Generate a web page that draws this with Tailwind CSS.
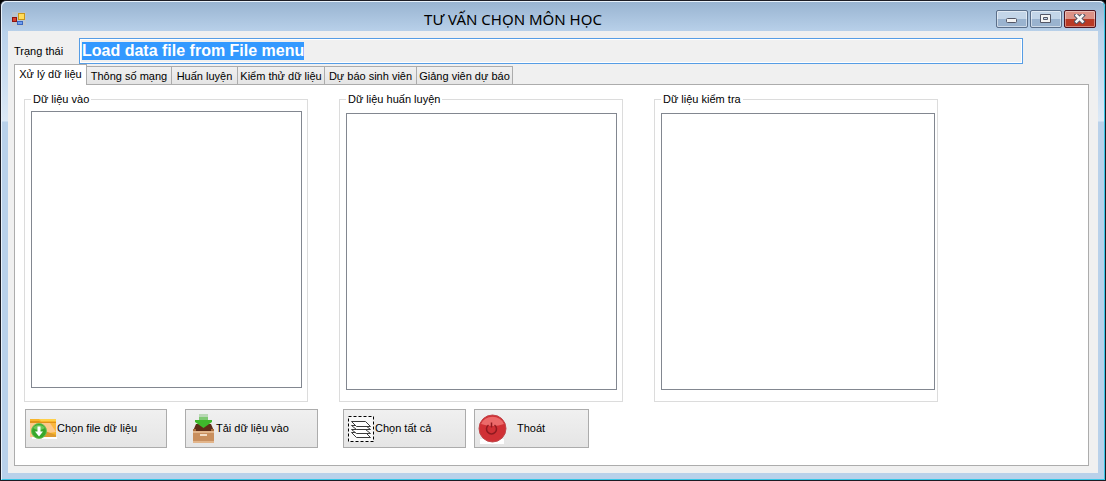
<!DOCTYPE html>
<html lang="vi">
<head>
  <meta charset="UTF-8">
  <meta name="viewport" content="width=device-width, initial-scale=1">
  <title>TƯ VẤN CHỌN MÔN HỌC</title>
  <script src="https://cdn.jsdelivr.net/npm/@tailwindcss/browser@4"></script>
</head>
<body class="bg-black">
  <div class="min-h-screen flex flex-col bg-[#b9d1ea] border border-[#1c1c24] rounded-t-md font-['Liberation_Sans',Arial,sans-serif] text-[11px] leading-[13px] text-black">
    <div class="flex-1 flex flex-col border border-t-[#e9f2fb] border-l-[#e9f2fb] border-r-[#37c6e6] border-b-[#37c6e6] rounded-t-md bg-linear-to-b from-[#99b4d1] to-[#b9d1ea] to-[30px]">

      <!-- Title bar -->
      <header class="h-[29px] flex items-center pl-[10px] pr-2">
        <svg class="w-[14px] h-[14px] mt-[5px]" viewBox="0 0 14 14">
          <rect x="0" y="0" width="14" height="14" fill="#c8c8c4" opacity=".5"/>
          <rect x="0.5" y="5.5" width="4" height="4" fill="#d8402c" stroke="#8d1410"/>
          <rect x="6.5" y="1.5" width="6" height="6" fill="#ffdc5a" stroke="#c8961a"/>
          <rect x="5.5" y="9.500" width="5" height="3" fill="#6f9ff0" stroke="#3a67c0"/>
        </svg>
        <h1 class="flex-1 pl-1 pt-1 text-center font-['Noto_Sans','Open_Sans',sans-serif] text-[15px] leading-5">TƯ VẤN CHỌN MÔN HỌC</h1>
        <div class="flex gap-[2px] pt-1">
          <button type="button" aria-label="Minimize" class="w-8 h-[18px] flex items-center justify-center rounded-xs border border-[#5b6f8a] inset-ring inset-ring-white/50 bg-linear-to-b from-[#c3d5e8] from-50% to-[#9ab3cf] to-50%">
            <svg class="w-[12px] h-[10px]" viewBox="0 0 12 10"><rect x=".5" y="4.500" width="10" height="4" rx="1" fill="#f4f4f4" stroke="#535666"/></svg>
          </button>
          <button type="button" aria-label="Maximize" class="w-8 h-[18px] flex items-center justify-center rounded-xs border border-[#5b6f8a] inset-ring inset-ring-white/50 bg-linear-to-b from-[#c3d5e8] from-50% to-[#9ab3cf] to-50%">
            <svg class="w-[12px] h-[10px]" viewBox="0 0 12 10"><path d="M.5 .5h10v8h-10zM3.500 3.500v2h4v-2z" fill="#f4f4f4" fill-rule="evenodd" stroke="#535666"/></svg>
          </button>
          <button type="button" aria-label="Close" class="w-8 h-[18px] flex items-center justify-center rounded-xs border border-[#4d1420] inset-ring inset-ring-white/40 bg-linear-to-b from-[#dc9286] from-50% to-[#b93a25] to-50%">
            <svg class="w-[12px] h-[10px]" viewBox="0 0 12 10">
              <path d="M2.500 1.500l6 6M8.500 1.500l-6 6" stroke="#535666" stroke-width="4.500" stroke-linecap="square"/>
              <path d="M2.500 1.500l6 6M8.500 1.500l-6 6" stroke="#f6f6f6" stroke-width="2.500" stroke-linecap="square"/>
            </svg>
          </button>
        </div>
      </header>

      <div class="flex-1 flex flex-col px-[6px] pb-[6px] bg-linear-to-b from-[#b9d1ea] via-[#dce9f6] via-[90px] to-[#b9d1ea] to-[91px]">
        <main class="flex-1 flex flex-col bg-[#f0f0f0] pt-[7px] pl-[6px] pr-[9px] pb-[7px]">

          <div class="flex items-center pr-[66px]">
            <label for="status" class="w-[65px]">Trạng thái</label>
            <input id="status" type="text" readonly value="Load data file from File menu" class="flex-1 min-w-0 h-[26px] px-[2px] pb-[1px] border border-[#569de5] inset-ring inset-ring-white bg-[#f0f0f0] outline-none text-base leading-5 font-bold selection:bg-[#3399ff] selection:text-white">
          </div>

          <div role="tablist" class="relative flex items-end h-[21px] -mb-px">
            <button type="button" role="tab" aria-selected="true" class="w-[73px] h-[21px] pb-px -mr-px z-1 border border-b-0 border-[#acacac] bg-white whitespace-nowrap">Xử lý dữ liệu</button>
            <button type="button" role="tab" aria-selected="false" class="w-[86px] h-[19px] pt-px -mr-px border border-[#acacac] bg-linear-to-b from-[#f0f0f0] to-[#e5e5e5] whitespace-nowrap">Thông số mạng</button>
            <button type="button" role="tab" aria-selected="false" class="w-[67px] h-[19px] pt-px -mr-px border border-[#acacac] bg-linear-to-b from-[#f0f0f0] to-[#e5e5e5] whitespace-nowrap">Huấn luyện</button>
            <button type="button" role="tab" aria-selected="false" class="w-[88px] h-[19px] pt-px -mr-px border border-[#acacac] bg-linear-to-b from-[#f0f0f0] to-[#e5e5e5] whitespace-nowrap">Kiểm thử dữ liệu</button>
            <button type="button" role="tab" aria-selected="false" class="w-[93px] h-[19px] pt-px -mr-px border border-[#acacac] bg-linear-to-b from-[#f0f0f0] to-[#e5e5e5] whitespace-nowrap">Dự báo sinh viên</button>
            <button type="button" role="tab" aria-selected="false" class="w-[97px] h-[19px] pt-px border border-[#acacac] bg-linear-to-b from-[#f0f0f0] to-[#e5e5e5] whitespace-nowrap">Giảng viên dự báo</button>
          </div>

          <section role="tabpanel" class="flex-1 border border-[#acacac] bg-white pt-2 pl-[9px] pb-4">
            <div class="flex gap-[31px]">
              <fieldset class="w-[284px] h-[309px] border border-[#dcdcdc] pl-[6px]">
                <legend class="px-[2px]"><label for="input-data">Dữ liệu vào</label></legend>
                <select id="input-data" multiple class="block w-[271px] h-[277px] mt-[5px] border border-[#828790] bg-white"></select>
              </fieldset>
              <fieldset class="w-[284px] h-[309px] border border-[#dcdcdc] pl-[6px]">
                <legend class="px-[2px]"><label for="train-data">Dữ liệu huấn luyện</label></legend>
                <select id="train-data" multiple class="block w-[271px] h-[277px] mt-[7px] border border-[#828790] bg-white"></select>
              </fieldset>
              <fieldset class="w-[284px] h-[309px] border border-[#dcdcdc] pl-[6px]">
                <legend class="px-[2px]"><label for="test-data">Dữ liệu kiểm tra</label></legend>
                <select id="test-data" multiple class="block w-[274px] h-[277px] mt-[7px] border border-[#828790] bg-white"></select>
              </fieldset>
            </div>

            <div class="flex pt-[7px] pl-px">
              <button type="button" class="w-[142px] h-[39px] mr-[18px] pl-1 flex items-center border border-[#acacac] bg-linear-to-b from-[#f0f0f0] to-[#e5e5e5] whitespace-nowrap">
                <svg class="w-[27px] h-[22px]" viewBox="0 0 27 22">
                  <path d="M2 19h25v2H2z" fill="#fff"/>
                  <path d="M0 1h26v18H0z" fill="#f7b52c"/>
                  <path d="M9 1h17v2H11z" fill="#ffd04a"/>
                  <path d="M0 3h9l2 1h15v1H0z" fill="#e0921a"/>
                  <path d="M0 5h26v9l-7 1-3 4H0z" fill="#fdc98a"/>
                  <path d="M15 13l11 4v2H14z" fill="#dd9a2e"/>
                  <path d="M20 5h6v9z" fill="#fbb840"/>
                  <circle cx="9" cy="13" r="7.500" fill="#37a82b" stroke="#6fbf58"/>
                  <path d="M3 10a7 6 0 0 1 12 0q-6 4-12 0z" fill="#86d66c" opacity=".7"/>
                  <path d="M7.500 8.500h3v5h2.500L9 18.500l-4-5h2.500z" fill="#fff"/>
                </svg>
                Chọn file dữ liệu
              </button>
              <button type="button" class="w-[133px] h-[39px] mr-[25px] pl-[6px] flex items-center border border-[#acacac] bg-linear-to-b from-[#f0f0f0] to-[#e5e5e5] whitespace-nowrap">
                <svg class="w-[24px] h-[30px]" viewBox="0 0 24 30">
                  <path d="M4 10h15l3 7H1z" fill="#5d2d18"/>
                  <path d="M1 15h3v2H1zM19 15h3v2h-3z" fill="#a86c3c"/>
                  <path d="M1 17h21v12H1z" fill="#c98f5e"/>
                  <path d="M1 17h21v2H1zM1 27h21v2H1z" fill="#e2b58b"/>
                  <path d="M8 20h7v2H8z" fill="#f3dcc6"/>
                  <path d="M7 0h9v6h4v2l-8.500 6L3 8V6h4z" fill="#3fb82c"/>
                  <path d="M7 0h9v3H7z" fill="#b9d8b5"/>
                  <path d="M7 3h9v3H7z" fill="#7fc973"/>
                </svg>
                Tải dữ liệu vào
              </button>
              <button type="button" class="w-[123px] h-[39px] mr-2 pl-1 flex items-center border border-[#acacac] bg-linear-to-b from-[#f0f0f0] to-[#e5e5e5] whitespace-nowrap">
                <svg class="w-[27px] h-[28px]" viewBox="0 0 27 28">
                  <rect x=".5" y="1.500" width="25" height="25" fill="#f8f8f8" stroke="#000" stroke-dasharray="3 2"/>
                  <g fill="#fff" stroke="#3a3a3a">
                    <path d="M3.500 17.500h14l5 5h-14z"/>
                    <path d="M3.500 14.500h14l5 4h-14z"/>
                    <path d="M3.500 10.500h14l5 4h-14z"/>
                    <path d="M3.500 6.500h14l5 5h-14z"/>
                  </g>
                </svg>
                Chọn tất cả
              </button>
              <button type="button" class="w-[115px] h-[39px] pl-[3px] flex items-center gap-[10px] border border-[#acacac] bg-linear-to-b from-[#f0f0f0] to-[#e5e5e5] whitespace-nowrap">
                <svg class="w-[29px] h-[30px]" viewBox="0 0 29 30">
                  <rect x="2" y="25" width="24" height="5" fill="#fff"/>
                  <circle cx="14.500" cy="14.500" r="13.500" fill="#d03035" stroke="#c0484c"/>
                  <path d="M3 10a12 10 0 0 1 23 0q-11 4-23 0z" fill="#ec6a6a"/>
                  <path d="M10.500 11a5 5 0 1 0 6 0M13.500 8.500v5" fill="none" stroke="#8f1a20" stroke-width="1.500"/>
                </svg>
                Thoát
              </button>
            </div>
          </section>
        </main>
      </div>
    </div>
  </div>

  <script>
    const statusBox = document.getElementById('status');
    statusBox.focus();
    statusBox.select();
  </script>
</body>
</html>
